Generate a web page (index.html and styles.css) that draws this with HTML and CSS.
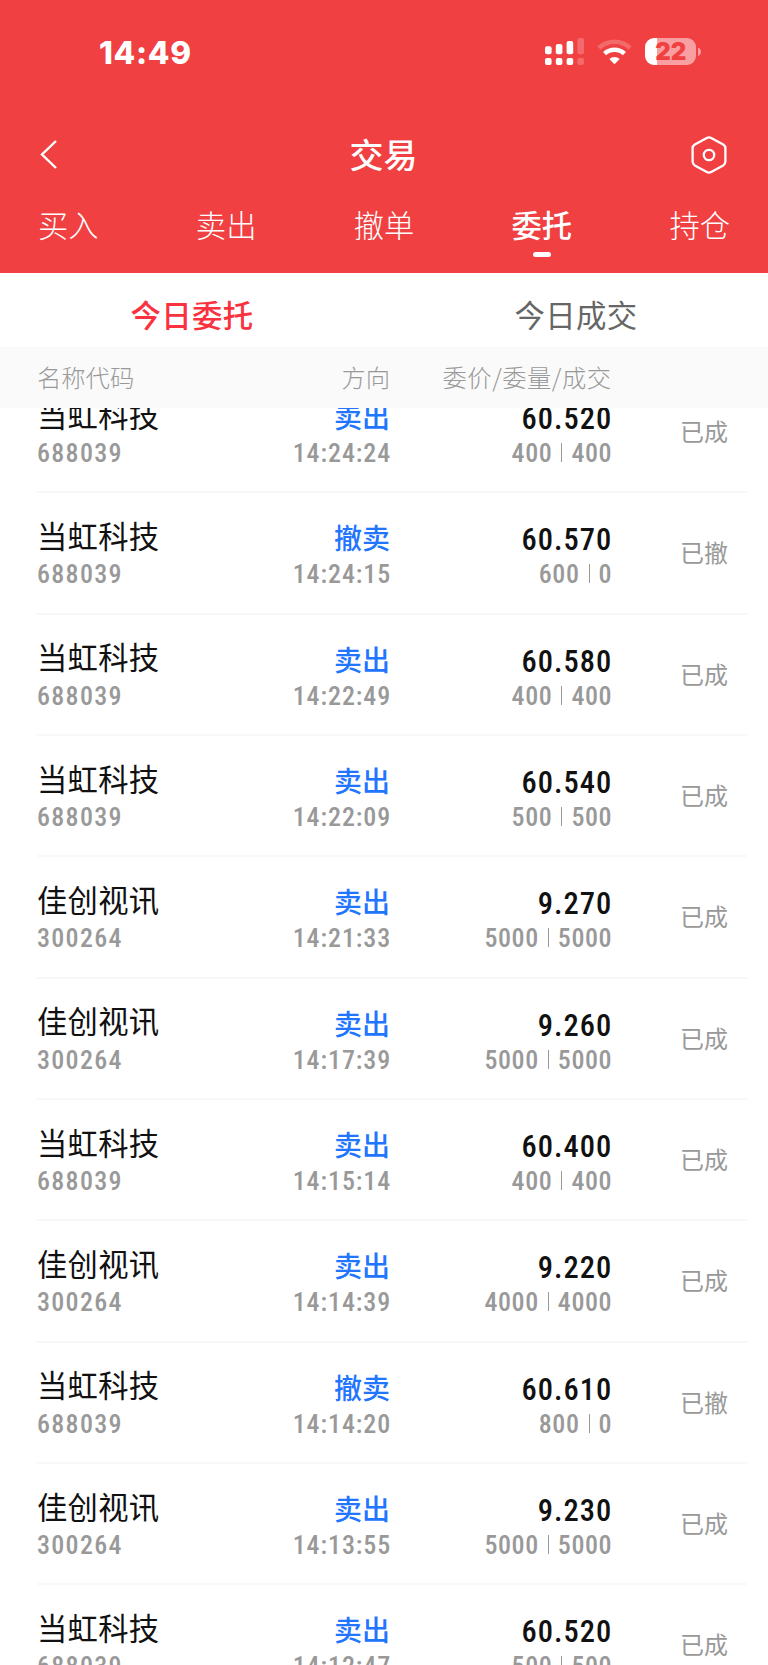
FILE: index.html
```html
<!DOCTYPE html>
<html lang="zh-CN">
<head>
    <meta charset="UTF-8">
    <meta name="viewport" content="width=device-width, initial-scale=1.0">
    <title>交易</title>
    <link rel="stylesheet" href="styles.css">
</head>
<body>
    <header class="header">
        <div class="status-bar">
            <span class="clock">14:49</span>
            <svg class="status-icons" width="160" height="32" viewBox="542 36 160 32">
                <g fill="#fff">
                    <rect x="545" y="46.3" width="6.6" height="8" rx="2"/>
                    <rect x="555.8" y="44" width="6.6" height="10.3" rx="2"/>
                    <rect x="566.6" y="41" width="6.6" height="13.3" rx="2"/>
                    <rect x="545" y="58" width="6.6" height="7" rx="2"/>
                    <rect x="555.8" y="58" width="6.6" height="7" rx="2"/>
                    <rect x="566.6" y="58" width="6.6" height="7" rx="2"/>
                    <g opacity="0.22">
                        <rect x="577.4" y="38" width="6.6" height="16.3" rx="2"/>
                        <rect x="577.4" y="58" width="6.6" height="7" rx="2"/>
                    </g>
                    <path d="M614.5 64.2l-5.2-5.1a7.6 7.6 0 0 1 10.4 0z"/>
                </g>
                <path d="M604.6 53.7a14.4 14.4 0 0 1 19.8 0" fill="none" stroke="#fff" stroke-width="4.6"/>
                <path d="M599 48a22.5 22.5 0 0 1 31 0" fill="none" stroke="#fff" stroke-opacity="0.22" stroke-width="4.6"/>
                <path d="M657 38h30a9 9 0 0 1 9 9v9a9 9 0 0 1-9 9h-30z" fill="#fff" fill-opacity="0.5"/>
                <path d="M657 38h-3a9 9 0 0 0-9 9v9a9 9 0 0 0 9 9h3z" fill="#fff"/>
                <path d="M698 47.5c4 1.500 4 7 0 8.500z" fill="#fff" fill-opacity="0.5"/>
                <text class="battery-text" x="670.8" y="60" text-anchor="middle">22</text>
            </svg>
        </div>
        <div class="nav-bar">
            <svg width="20" height="32" viewBox="0 0 20 32" fill="none" stroke="#fff" stroke-width="2.4">
                <path d="M18 2L4 15.500L18 29"/>
            </svg>
            <h1 class="title">交易</h1>
            <svg width="36" height="40" viewBox="0 0 36 40" fill="none" stroke="#fff" stroke-width="2.3">
                <path d="M15.800 2.900q2.200-1.200 4.400 0l12 6.700q2.200 1.300 2.200 3.800v13.200q0 2.500-2.200 3.800l-12 6.700q-2.200 1.200-4.400 0l-12-6.700q-2.200-1.300-2.200-3.800v-13.200q0-2.500 2.200-3.800z"/>
                <circle cx="18" cy="20" r="5.200"/>
            </svg>
        </div>
        <nav class="tabs">
            <span class="tab">买入</span>
            <span class="tab">卖出</span>
            <span class="tab">撤单</span>
            <span class="tab active">委托</span>
            <span class="tab">持仓</span>
        </nav>
    </header>

    <div class="sub-tabs">
        <span class="sub-tab active">今日委托</span>
        <span class="sub-tab">今日成交</span>
    </div>

    <div class="list-head">
        <span>名称代码</span>
        <span class="right">方向</span>
        <span class="right">委价/委量/成交</span>
    </div>

    <main class="list">
        <div class="row">
            <div><p class="name">当虹科技</p><p class="code">688039</p></div>
            <div class="right"><p class="side">卖出</p><p class="time">14:24:24</p></div>
            <div class="right"><p class="price">60.520</p><p class="volume">400<i></i>400</p></div>
            <div class="state">已成</div>
        </div>
        <div class="row">
            <div><p class="name">当虹科技</p><p class="code">688039</p></div>
            <div class="right"><p class="side">撤卖</p><p class="time">14:24:15</p></div>
            <div class="right"><p class="price">60.570</p><p class="volume">600<i></i>0</p></div>
            <div class="state">已撤</div>
        </div>
        <div class="row">
            <div><p class="name">当虹科技</p><p class="code">688039</p></div>
            <div class="right"><p class="side">卖出</p><p class="time">14:22:49</p></div>
            <div class="right"><p class="price">60.580</p><p class="volume">400<i></i>400</p></div>
            <div class="state">已成</div>
        </div>
        <div class="row">
            <div><p class="name">当虹科技</p><p class="code">688039</p></div>
            <div class="right"><p class="side">卖出</p><p class="time">14:22:09</p></div>
            <div class="right"><p class="price">60.540</p><p class="volume">500<i></i>500</p></div>
            <div class="state">已成</div>
        </div>
        <div class="row">
            <div><p class="name">佳创视讯</p><p class="code">300264</p></div>
            <div class="right"><p class="side">卖出</p><p class="time">14:21:33</p></div>
            <div class="right"><p class="price">9.270</p><p class="volume">5000<i></i>5000</p></div>
            <div class="state">已成</div>
        </div>
        <div class="row">
            <div><p class="name">佳创视讯</p><p class="code">300264</p></div>
            <div class="right"><p class="side">卖出</p><p class="time">14:17:39</p></div>
            <div class="right"><p class="price">9.260</p><p class="volume">5000<i></i>5000</p></div>
            <div class="state">已成</div>
        </div>
        <div class="row">
            <div><p class="name">当虹科技</p><p class="code">688039</p></div>
            <div class="right"><p class="side">卖出</p><p class="time">14:15:14</p></div>
            <div class="right"><p class="price">60.400</p><p class="volume">400<i></i>400</p></div>
            <div class="state">已成</div>
        </div>
        <div class="row">
            <div><p class="name">佳创视讯</p><p class="code">300264</p></div>
            <div class="right"><p class="side">卖出</p><p class="time">14:14:39</p></div>
            <div class="right"><p class="price">9.220</p><p class="volume">4000<i></i>4000</p></div>
            <div class="state">已成</div>
        </div>
        <div class="row">
            <div><p class="name">当虹科技</p><p class="code">688039</p></div>
            <div class="right"><p class="side">撤卖</p><p class="time">14:14:20</p></div>
            <div class="right"><p class="price">60.610</p><p class="volume">800<i></i>0</p></div>
            <div class="state">已撤</div>
        </div>
        <div class="row">
            <div><p class="name">佳创视讯</p><p class="code">300264</p></div>
            <div class="right"><p class="side">卖出</p><p class="time">14:13:55</p></div>
            <div class="right"><p class="price">9.230</p><p class="volume">5000<i></i>5000</p></div>
            <div class="state">已成</div>
        </div>
        <div class="row">
            <div><p class="name">当虹科技</p><p class="code">688039</p></div>
            <div class="right"><p class="side">卖出</p><p class="time">14:12:47</p></div>
            <div class="right"><p class="price">60.520</p><p class="volume">500<i></i>500</p></div>
            <div class="state">已成</div>
        </div>
    </main>
</body>
</html>
```
FILE: styles.css
```css
* {
    box-sizing: border-box;
}
body {
    display: flex;
    flex-direction: column;
    width: 768px;
    height: 1665px;
    margin: 0;
    overflow: hidden;
    background-color: #fff;
    font-family: Roboto, "Noto Sans CJK SC", sans-serif;
}
h1, p {
    margin: 0;
}

/* header */
.header {
    flex: none;
    height: 273px;
    background-color: #f04042;
    color: #fff;
}
.status-bar {
    display: flex;
    justify-content: space-between;
    height: 104px;
    padding: 36px 66px 0 99px;
}
.clock {
    font-family: Inter, sans-serif;
    font-size: 31.5px;
    font-weight: 800;
    letter-spacing: 0.7px;
    line-height: 33px;
}
.battery-text {
    font-family: Inter, sans-serif;
    font-size: 24px;
    font-weight: 900;
    fill: #f04042;
}
.nav-bar {
    display: flex;
    justify-content: space-between;
    align-items: center;
    height: 102px;
    padding: 0 41px 0 38px;
}
.title {
    padding: 2px 0 0 18px;
    font-size: 34px;
    font-weight: 500;
    line-height: 40px;
}
.tabs {
    display: flex;
    justify-content: space-between;
    padding: 0 38px;
}
.tab {
    position: relative;
    font-size: 30.3px;
    font-weight: 300;
    line-height: 42px;
}
.tab.active {
    font-weight: 500;
}
.tab.active::after {
    content: "";
    position: absolute;
    left: 21px;
    bottom: -9px;
    width: 18px;
    height: 5px;
    border-radius: 3px;
    background-color: #fff;
}

/* today tabs */
.sub-tabs {
    display: flex;
    flex: none;
    height: 74px;
}
.sub-tab {
    flex: 1;
    color: #666;
    font-size: 30.4px;
    letter-spacing: 0.3px;
    line-height: 88px;
    text-align: center;
}
.sub-tab.active {
    color: #fa3240;
    font-weight: 500;
}

/* order list */
.list-head,
.row {
    display: grid;
    grid-template-columns: 160px 193px 221px 117px;
}
.right {
    text-align: right;
}
.list-head {
    flex: none;
    height: 61px;
    padding-left: 37px;
    background-color: #fafafa;
    color: #999;
    font-family: "Noto Sans CJK SC", sans-serif;
    font-size: 24.3px;
    font-weight: 300;
    line-height: 59px;
}
.list-head .right:last-child {
    margin-right: -0.5px;
    letter-spacing: 0.5px;
}
.list {
    flex: 1;
    min-height: 0;
    overflow: hidden;
}
.row {
    width: 710px;
    height: 121.35px;
    margin-left: 37px;
    border-bottom: 2px solid #f8f8f8;
}
.row:first-child {
    margin-top: -36px;
}
.name {
    padding-top: 23.5px;
    color: #111;
    font-size: 30.3px;
    letter-spacing: 0.3px;
    line-height: 41.5px;
}
.code,
.time,
.volume {
    color: #999;
    font-size: 26px;
    font-stretch: 84%;
    font-weight: 500;
    letter-spacing: 1.3px;
    line-height: 32px;
}
.time,
.volume,
.price {
    margin-right: -1.2px;
}
.time {
    letter-spacing: 0.9px;
}
.volume {
    letter-spacing: 0.6px;
}
.side {
    padding-top: 28px;
    color: #2175ff;
    font-size: 28px;
    font-weight: 500;
    line-height: 37px;
}
.price {
    padding-top: 29px;
    color: #111;
    font-size: 30.5px;
    font-stretch: 82%;
    font-weight: 550;
    letter-spacing: 1px;
    line-height: 36px;
}
.volume i {
    display: inline-block;
    width: 1px;
    height: 19px;
    margin: 0 9px;
    background-color: #999;
}
.state {
    color: #999;
    font-size: 24px;
    line-height: 122px;
    text-align: right;
}
```
